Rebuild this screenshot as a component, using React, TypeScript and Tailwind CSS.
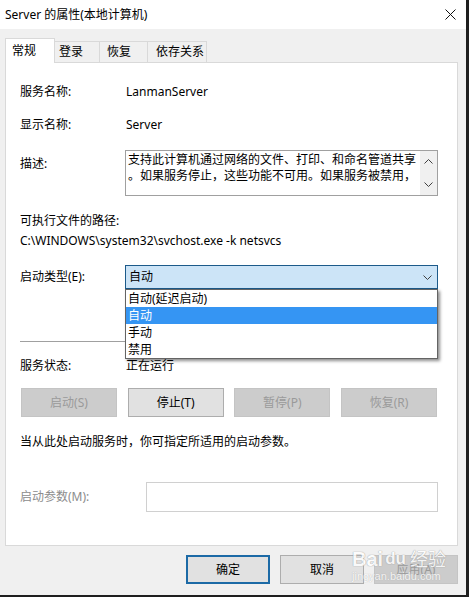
import React from "react";

const FONT = { fontFamily: '"Noto Sans", "Noto Sans CJK SC", sans-serif' };

function Chevron({ className = "" }: { className?: string }) {
  return (
    <svg width="9" height="5" viewBox="0 0 9 5" className={className}>
      <path d="M0.5 0.5 L4.5 4.5 L8.5 0.5" fill="none" stroke="#404040" strokeWidth="1" />
    </svg>
  );
}

function Btn({
  children,
  disabled,
  w,
  def,
}: {
  children: React.ReactNode;
  disabled?: boolean;
  w: string;
  def?: boolean;
}) {
  const base = "h-[29px] flex items-center justify-center text-[12px] ";
  if (disabled)
    return <div className={base + w + " bg-[#cccccc] border border-[#c4c4c4] text-[#9a9a9a]"}>{children}</div>;
  if (def)
    return <div className={base + w + " bg-[#e1e1e1] border-2 border-[#1c6aa6] text-black"}>{children}</div>;
  return <div className={base + w + " bg-[#e1e1e1] border border-[#adadad] text-black"}>{children}</div>;
}

export default function App() {
  return (
    <div
      style={FONT}
      className="relative w-[469px] h-[597px] flex flex-col bg-[#f0f0f0] border-r-[3px] border-b-2 border-[#1e1e1e] text-black text-[12px] overflow-hidden"
    >
      {/* Title bar */}
      <div className="h-[29px] bg-white flex items-center pl-[5px] pr-[8px] shrink-0">
        <span className="flex-1 text-[12px]">Server 的属性(本地计算机)</span>
        <svg width="11" height="11" viewBox="0 0 11 11" className="mr-[2px]">
          <path d="M0.5 0.5 L10.5 10.5 M10.5 0.5 L0.5 10.5" stroke="#111" strokeWidth="1" />
        </svg>
      </div>

      <div className="flex-1 flex flex-col pl-[5px] pr-[8px]">
        {/* Tabs */}
        <div className="h-[33px] flex items-end shrink-0">
          <div className="relative z-10 -mb-px h-[25px] w-[50px] bg-white border border-b-0 border-[#d9d9d9] pl-[6px] flex items-center">
            常规
          </div>
          <div className="h-[21px] w-[45px] border-t border-r border-[#d9d9d9] pl-[4px] flex items-center">登录</div>
          <div className="h-[21px] w-[48px] border-t border-r border-[#d9d9d9] pl-[7px] flex items-center">恢复</div>
          <div className="h-[21px] w-[59px] border-t border-r border-[#d9d9d9] pl-[8px] flex items-center">依存关系</div>
        </div>

        {/* Panel */}
        <div className="h-[484px] bg-white border border-[#d9d9d9] pl-[14px] pr-[19px] flex flex-col shrink-0">
          <div className="mt-[20px] h-[18px] flex items-center">
            <span className="w-[106px]">服务名称:</span>
            <span>LanmanServer</span>
          </div>
          <div className="mt-[15px] h-[18px] flex items-center">
            <span className="w-[106px]">显示名称:</span>
            <span>Server</span>
          </div>
          <div className="mt-[16px] h-[46px] flex">
            <span className="w-[105px] mt-[5px] h-[18px] flex items-center">描述:</span>
            <div className="flex-1 border border-[#a0a0a0] flex">
              <div className="flex-1 pl-[2px] pt-[1px] leading-[16px] text-[12px]">
                <div>支持此计算机通过网络的文件、打印、和命名管道共享</div>
                <div>。如果服务停止，这些功能不可用。如果服务被禁用，</div>
              </div>
              <div className="w-[17px] bg-[#f0f0f0] flex flex-col items-center justify-between py-[8px]">
                <Chevron className="rotate-180" />
                <Chevron />
              </div>
            </div>
          </div>
          <div className="mt-[16px] h-[18px] flex items-center">可执行文件的路径:</div>
          <div className="mt-[2px] h-[18px] flex items-center">C:\WINDOWS\system32\svchost.exe -k netsvcs</div>
          <div className="mt-[15px] h-[24px] flex items-center">
            <span className="w-[105px]">启动类型(E):</span>
            <div className="relative flex-1 h-[24px]">
              <div className="h-full bg-[#cce4f7] border border-[#1c5a8a] flex items-center pl-[3px] pr-[5px]">
                <span className="flex-1">自动</span>
                <Chevron />
              </div>
              <div className="absolute left-0 right-0 top-[24px] z-20 bg-white border border-[#646464] shadow-[2px_2px_3px_rgba(0,0,0,0.45)] flex flex-col">
                <div className="h-[17px] pl-[2px] flex items-center">自动(延迟启动)</div>
                <div className="h-[17px] pl-[2px] flex items-center bg-[#3595f3] text-white">自动</div>
                <div className="h-[17px] pl-[2px] flex items-center">手动</div>
                <div className="h-[17px] pl-[2px] flex items-center">禁用</div>
              </div>
            </div>
          </div>
          <div className="mt-[52px] h-px bg-[#a0a0a0]" />
          <div className="mt-[15px] h-[18px] flex items-center">
            <span className="w-[106px]">服务状态:</span>
            <span>正在运行</span>
          </div>
          <div className="mt-[13px] h-[29px] flex justify-between pl-px pr-px">
            <Btn disabled w="w-[96px]">启动(S)</Btn>
            <Btn w="w-[96px]">停止(T)</Btn>
            <Btn disabled w="w-[96px]">暂停(P)</Btn>
            <Btn disabled w="w-[96px]">恢复(R)</Btn>
          </div>
          <div className="mt-[16px] h-[18px] flex items-center">当从此处启动服务时，你可指定所适用的启动参数。</div>
          <div className="mt-[31px] h-[30px] flex items-center">
            <span className="w-[126px] text-[#8c8c8c]">启动参数(M):</span>
            <div className="flex-1 h-[30px] border border-[#d0d0d0] bg-white" />
          </div>
        </div>

        {/* Bottom buttons */}
        <div className="mt-[9px] flex justify-end gap-[10px]">
          <Btn def w="w-[84px]">确定</Btn>
          <Btn w="w-[84px]">取消</Btn>
          <Btn disabled w="w-[84px]">应用(A)</Btn>
        </div>
      </div>

      {/* Baidu watermark */}
      <div className="absolute left-[352px] top-[548px] pointer-events-none flex flex-col items-start opacity-80">
        <div className="flex items-end gap-[2px] text-white [text-shadow:0_0_1px_#9a9a9a,0_0_1px_#9a9a9a]">
          <span className="text-[20px] font-bold leading-[22px]" style={{ fontFamily: '"Liberation Sans", sans-serif' }}>
            Bai
          </span>
          <span className="text-[17px] font-bold leading-[22px]" style={{ fontFamily: '"Liberation Sans", sans-serif' }}>
            du
          </span>
          <span className="text-[18px] leading-[22px] ml-[2px]">经验</span>
        </div>
        <div className="text-[11px] leading-[12px] text-white [text-shadow:0_0_1px_#9a9a9a]" style={{ fontFamily: '"Liberation Sans", sans-serif' }}>
          jingyan.baidu.com
        </div>
      </div>
    </div>
  );
}
